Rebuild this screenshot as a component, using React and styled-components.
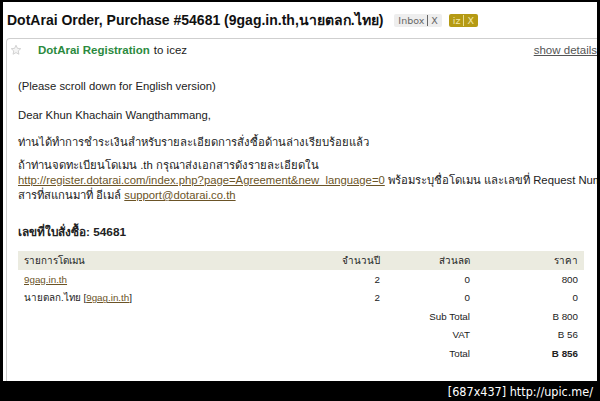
import React from 'react';
import styled, { createGlobalStyle } from 'styled-components';

const GlobalStyle = createGlobalStyle`
  html, body {
    margin: 0;
    padding: 0;
    background: #000;
  }
  body {
    font-family: Arial, "Liberation Sans", "DejaVu Sans", sans-serif;
  }
`;

const Frame = styled.div`
  width: 600px;
  height: 401px;
  background: #000;
  display: flex;
  flex-direction: column;
  overflow: hidden;
`;

const Screen = styled.div`
  height: 379px;
  margin: 2px 3px 0 3px;
  background: #fff;
  overflow: hidden;
  display: flex;
  flex-direction: column;
`;

const TitleRow = styled.div`
  display: flex;
  align-items: center;
  gap: 11px;
  height: 36px;
  padding-left: 4px;
  white-space: nowrap;
`;

const Subject = styled.h1`
  margin: 0;
  font-size: 14px;
  font-weight: bold;
  color: #111;
`;

const Labels = styled.div`
  display: flex;
  gap: 7px;
`;

const Label = styled.span`
  display: inline-flex;
  align-items: center;
  height: 13px;
  padding: 0 4px;
  border-radius: 2px;
  font-family: "DejaVu Sans", sans-serif;
  font-size: 9.5px;
  background: ${p => (p.$gold ? '#b59a14' : '#eeeeee')};
  color: ${p => (p.$gold ? '#f3e8a8' : '#666')};
`;

const LabelSep = styled.span`
  margin: 0 3px;
  border-left: 1px solid ${p => (p.$gold ? '#e8dc90' : '#666')};
  height: 11px;
`;

const Card = styled.div`
  flex: 1;
  margin-left: 3px;
  border-top: 1px solid #cfcfcf;
  border-left: 1px solid #cfcfcf;
  border-top-left-radius: 4px;
  overflow: hidden;
`;

const CardHead = styled.div`
  display: flex;
  align-items: center;
  height: 18px;
  padding: 2px 0 0 3px;
  font-size: 11.5px;
  white-space: nowrap;
`;

const Star = styled.svg`
  width: 12px;
  height: 12px;
  margin-right: 16px;
`;

const Sender = styled.span`
  color: #2b8a3e;
  font-weight: bold;
`;

const Recipient = styled.span`
  color: #222;
  margin-left: 4px;
`;

const ShowDetails = styled.a`
  margin-left: auto;
  color: #555;
  text-decoration: underline;
  font-size: 11.5px;
  margin-right: 0;
`;

const Body = styled.div`
  padding: 20px 0 0 11px;
  font-size: 11.3px;
  color: #222;
  white-space: nowrap;
`;

const Para = styled.p`
  margin: 0 0 ${p => p.$gap || 13}px 0;
  line-height: 15px;
`;

const Link = styled.a`
  color: #6b5427;
  text-decoration: underline;
`;

const OrderTitle = styled.h3`
  margin: 19px 0 10px 0;
  font-size: 11.8px;
  font-weight: bold;
  color: #222;
`;

const Table = styled.table`
  width: 566px;
  border-collapse: collapse;
  font-size: 9.8px;
  color: #222;
`;

const HeadRow = styled.tr`
  background: #ebebe0;
`;

const Th = styled.th`
  height: 19px;
  padding: 0 6px;
  font-weight: normal;
  text-align: ${p => p.$align || 'right'};
  width: ${p => p.$w || 'auto'};
`;

const Td = styled.td`
  height: 18.5px;
  padding: 0 6px;
  text-align: ${p => p.$align || 'right'};
  font-weight: ${p => (p.$bold ? 'bold' : 'normal')};
`;

const Bar = styled.div`
  flex: 1;
  display: flex;
  align-items: center;
  justify-content: flex-end;
  padding-right: 7px;
  color: #fff;
  font-family: "Liberation Sans Narrow", "DejaVu Sans Condensed", sans-serif;
  font-size: 12.5px;
`;

const items = [
  { name: '9gag.in.th', link: true, years: 2, discount: 0, price: '800' },
  { name: 'นายตลก.ไทย', alias: '9gag.in.th', years: 2, discount: 0, price: '0' },
];

const totals = [
  { label: 'Sub Total', value: 'B 800' },
  { label: 'VAT', value: 'B 56' },
  { label: 'Total', value: 'B 856', bold: true },
];

const App = () => (
  <>
    <GlobalStyle />
    <Frame>
      <Screen>
        <TitleRow>
          <Subject>DotArai Order, Purchase #54681 (9gag.in.th,นายตลก.ไทย)</Subject>
          <Labels>
            <Label>Inbox<LabelSep />X</Label>
            <Label $gold>iz<LabelSep $gold />X</Label>
          </Labels>
        </TitleRow>
        <Card>
          <CardHead>
            <Star viewBox="0 0 24 24">
              <path
                d="M12 2.5l2.9 6.2 6.6.7-5 4.5 1.4 6.6L12 17.2l-5.9 3.3 1.4-6.6-5-4.5 6.6-.7z"
                fill="#f4f4f4"
                stroke="#c8c8c8"
                strokeWidth="1.6"
              />
            </Star>
            <Sender>DotArai Registration</Sender>
            <Recipient>to icez</Recipient>
            <ShowDetails>show details</ShowDetails>
          </CardHead>
          <Body>
            <Para $gap={14}>(Please scroll down for English version)</Para>
            <Para $gap={12}>Dear Khun Khachain Wangthammang,</Para>
            <Para $gap={8}>ท่านได้ทำการชำระเงินสำหรับรายละเอียดการสั่งซื้อด้านล่างเรียบร้อยแล้ว</Para>
            <Para $gap={0}>
              ถ้าท่านจดทะเบียนโดเมน .th กรุณาส่งเอกสารดังรายละเอียดใน
              <br />
              <Link>http://register.dotarai.com/index.php?page=Agreement&amp;new_language=0</Link>{' '}
              พร้อมระบุชื่อโดเมน และเลขที่ Request Number
              <br />
              สารที่สแกนมาที่ อีเมล์ <Link>support@dotarai.co.th</Link>
            </Para>
            <OrderTitle>เลขที่ใบสั่งซื้อ: 54681</OrderTitle>
            <Table>
              <thead>
                <HeadRow>
                  <Th $align="left">รายการโดเมน</Th>
                  <Th $w="80px">จำนวนปี</Th>
                  <Th $w="78px">ส่วนลด</Th>
                  <Th $w="96px">ราคา</Th>
                </HeadRow>
              </thead>
              <tbody>
                {items.map(it => (
                  <tr key={it.name}>
                    <Td $align="left">
                      {it.link ? <Link>{it.name}</Link> : it.name}
                      {it.alias && (
                        <>
                          {' '}[<Link>{it.alias}</Link>]
                        </>
                      )}
                    </Td>
                    <Td>{it.years}</Td>
                    <Td>{it.discount}</Td>
                    <Td>{it.price}</Td>
                  </tr>
                ))}
                {totals.map(t => (
                  <tr key={t.label}>
                    <Td />
                    <Td />
                    <Td>{t.label}</Td>
                    <Td $bold={t.bold}>{t.value}</Td>
                  </tr>
                ))}
              </tbody>
            </Table>
          </Body>
        </Card>
      </Screen>
      <Bar>[687x437] http://upic.me/</Bar>
    </Frame>
  </>
);

export default App;
